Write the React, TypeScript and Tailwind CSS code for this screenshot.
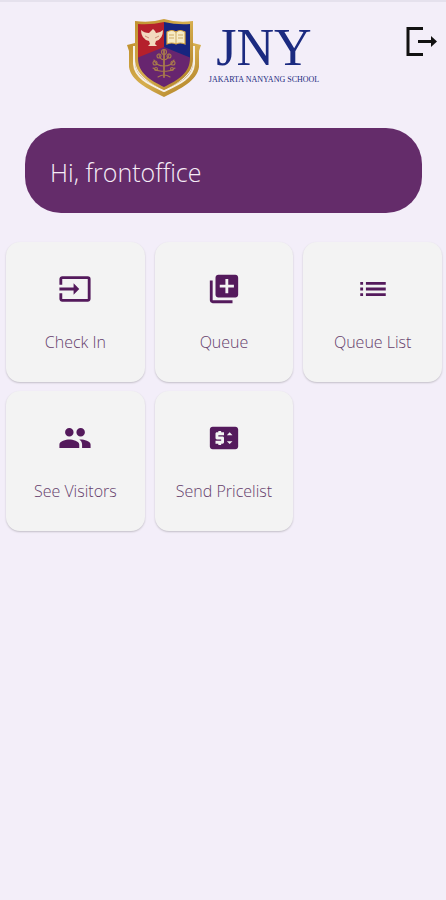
import React from "react"
import type { IconType } from "react-icons"
import { MdInput, MdLibraryAdd, MdList, MdPeople, MdPriceChange } from "react-icons/md"

interface MenuItem {
    label: string
    icon: IconType
}

const menuItems: MenuItem[] = [
    { label: "Check In", icon: MdInput },
    { label: "Queue", icon: MdLibraryAdd },
    { label: "Queue List", icon: MdList },
    { label: "See Visitors", icon: MdPeople },
    { label: "Send Pricelist", icon: MdPriceChange },
]

const Crest: React.FC = () => (
    <svg viewBox="0 0 74 78" className="h-[78px] w-[74px] shrink-0" aria-hidden="true">
        <defs>
            <linearGradient id="gold" x1="0" y1="0" x2="1" y2="1">
                <stop offset="0" stopColor="#c0912f" />
                <stop offset="0.5" stopColor="#d6ae4e" />
                <stop offset="1" stopColor="#a9781f" />
            </linearGradient>
            <clipPath id="field">
                <path d="M11 5Q24 6 37 3Q50 6 63 5V39C63 54 51 61 37 68C23 61 11 54 11 39Z" />
            </clipPath>
        </defs>

        {/* Ribbon round the shield */}
        <path
            d="M0 26L8 24V44C9 57 21 64 37 70C53 64 65 57 66 44V24L74 26L72 32V48C70 62 53 70 37 78C21 70 4 62 2 48V32Z"
            fill="url(#gold)"
        />
        <path d="M7 27V45C8 59 22 65 37 72C52 65 66 59 67 45V27" fill="none" stroke="#f6f0e6" strokeWidth="2" />

        <path d="M8 2Q24 4 37 0Q50 4 66 2V40C66 55 52 64 37 71C22 64 8 55 8 40Z" fill="url(#gold)" />
        <g clipPath="url(#field)">
            <path d="M0 0H37V31L0 44Z" fill="#b5202c" />
            <path d="M37 0H74V44L37 31Z" fill="#17257f" />
            <path d="M0 43L37 28L74 43V78H0Z" fill="#67256f" />
        </g>

        {/* Phoenix */}
        <path
            d="M14 11Q17 14 22 14L24 12L26 10L28 12L29 14Q33 14 36 11Q36 20 29 22L28 25L30 27H21L23 25L22 22Q14 20 14 11Z"
            fill="#f2d9bf"
        />
        <path d="M18 17L22 19M32 17L28 19" stroke="#c9806d" strokeWidth="0.900" />

        {/* Open book */}
        <path d="M40 13Q45 10 49 13Q53 10 58 13V25Q53 23 49 25Q45 23 40 25Z" fill="#f7ecc6" stroke="#d8a743" strokeWidth="1.200" />
        <path d="M49 13V25M42 16H47M51 16H56M42 19H47M51 19H56" stroke="#caa65a" strokeWidth="0.900" />

        {/* Tree */}
        <g fill="none" stroke="#a87a4c" strokeWidth="1.100" strokeLinecap="round">
            <path d="M37 31V58" strokeWidth="1.800" />
            <path d="M37 41Q32 40 32 35M37 41Q42 40 42 35M37 47Q29 47 27 41M37 47Q45 47 47 41M37 52Q31 53 26 49M37 52Q43 53 48 49M31 58Q37 54 43 58" />
            <circle cx="37" cy="33" r="2.500" />
            <circle cx="32" cy="37" r="2" />
            <circle cx="42" cy="37" r="2" />
            <circle cx="28" cy="44" r="2" />
            <circle cx="46" cy="44" r="2" />
            <circle cx="29" cy="50" r="1.500" />
            <circle cx="45" cy="50" r="1.500" />
        </g>
    </svg>
)

const Header: React.FC = () => (
    <header className="relative flex justify-center pt-[17px]">
        <div className="flex items-center gap-2">
            <Crest />
            <div className="flex flex-col items-center pb-1 whitespace-nowrap text-[#1b2a80]">
                <span className="font-['Liberation_Serif',serif] text-[52px] leading-12">JNY</span>
                <span className="font-['Liberation_Serif',serif] text-[8px] leading-4">JAKARTA NANYANG SCHOOL</span>
            </div>
        </div>
        <button type="button" aria-label="Log out" className="absolute top-6 right-2 cursor-pointer">
            <svg viewBox="0 0 32 32" className="size-8" aria-hidden="true">
                <path d="M17 2.500H2V28.500H17" fill="none" stroke="#111" strokeWidth="3" />
                <path d="M12 15.500H27" stroke="#111" strokeWidth="3" />
                <path d="M25 10L31 15.500L25 21Z" fill="#111" />
            </svg>
        </button>
    </header>
)

const MenuCard: React.FC<MenuItem> = ({ label, icon: Icon }) => (
    <button
        type="button"
        className="flex h-[140px] cursor-pointer flex-col items-center rounded-[14px] bg-[#f3f3f3] pt-[30px] shadow-[0_1px_2px_rgba(0,0,0,0.2)]"
    >
        <Icon className="size-[34px] text-[#541a5c]" />
        <span className="mt-6 text-base leading-6 font-light text-[#65406c]">{label}</span>
    </button>
)

export default function App() {
    return (
        <div className="min-h-screen border-t-2 border-[#e5e1ed] bg-[#f3eef9] font-['Open_Sans',sans-serif]">
            <Header />
            <main>
                <section className="mt-[31px] mr-6 ml-[25px] rounded-[36px] bg-[#642c6a] px-[25px] pt-[26px] pb-[23px]">
                    <h1 className="text-[25px] leading-9 font-[350] text-[#f6edf7]">
                        Hi, frontoffice
                    </h1>
                </section>
                <nav className="mt-[29px] grid grid-cols-3 gap-x-2.5 gap-y-[9px] pr-1 pl-1.5" aria-label="Menu">
                    {menuItems.map((item) => (
                        <MenuCard key={item.label} {...item} />
                    ))}
                </nav>
            </main>
        </div>
    )
}
